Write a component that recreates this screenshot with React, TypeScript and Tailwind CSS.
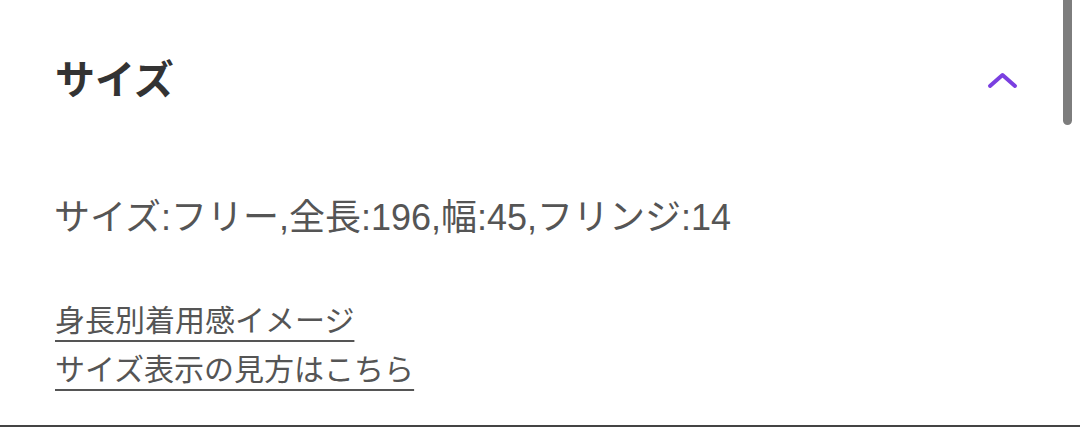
export default function App() {
  return (
    <div
      className="relative w-[1080px] h-[427px] bg-white overflow-hidden"
      style={{ fontFamily: '"Liberation Sans", "Noto Sans CJK JP", sans-serif' }}
    >
      <div className="flex flex-col h-full border-b-2 border-[#444444]">
        <div className="flex items-center justify-between pl-[55px] pr-[62px] pt-[50px]">
          <h2 className="text-[40px] leading-[60px] font-bold text-[#333333]">サイズ</h2>
          <svg width="31" height="17" viewBox="0 0 31 17" fill="none">
            <path d="M3 14L15.5 3L28 14" stroke="#7a3fe0" strokeWidth="4" strokeLinecap="round" strokeLinejoin="round" />
          </svg>
        </div>
        <p className="pl-[54px] mt-[83px] text-[36px] leading-[50px] text-[#555555]">
          サイズ:フリー,全長:196,幅:45,フリンジ:14
        </p>
        <div className="flex flex-col items-start pl-[55px] mt-[56px] gap-[6px]">
          <a className="text-[30px] leading-[43px] text-[#555555] underline decoration-2 underline-offset-[9px]">身長別着用感イメージ</a>
          <a className="text-[30px] leading-[43px] text-[#555555] underline decoration-2 underline-offset-[9px]">サイズ表示の見方はこちら</a>
        </div>
      </div>
      <div className="absolute right-[8px] top-[-10px] w-[9px] h-[135px] rounded-full bg-[#7d7d7d]" />
    </div>
  )
}
